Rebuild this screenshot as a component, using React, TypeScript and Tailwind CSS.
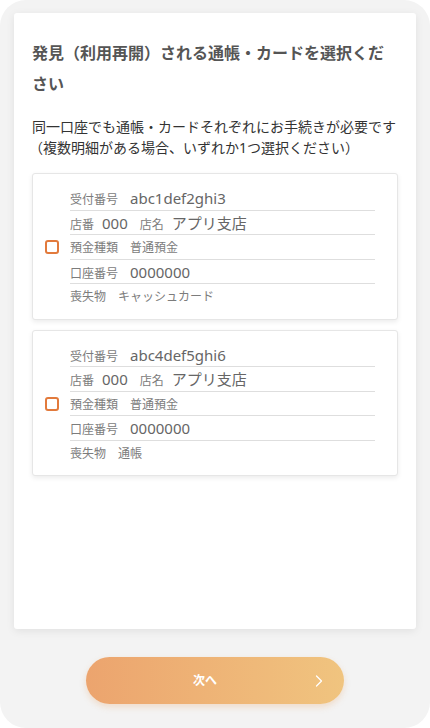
import { ChevronRight } from "lucide-react";

const font = { fontFamily: '"Noto Sans", "Noto Sans CJK JP", sans-serif' };

type Item = {
  receipt: string;
  lost: string;
};

const items: Item[] = [
  { receipt: "abc1def2ghi3", lost: "キャッシュカード" },
  { receipt: "abc4def5ghi6", lost: "通帳" },
];

function Row({ children, last }: { children: React.ReactNode; last?: boolean }) {
  return (
    <div
      className={`flex items-baseline gap-2 h-[24.5px] pt-[1px] overflow-hidden ${
        last ? "" : "border-b border-[#dedede]"
      }`}
    >
      {children}
    </div>
  );
}

function AccountCard({ item }: { item: Item }) {
  return (
    <div className="flex items-center rounded-[3px] border border-[#e6e6e6] bg-white pl-[12px] pr-[22px] pt-[12px] pb-[10px] shadow-[0_2px_5px_rgba(0,0,0,0.08)]">
      <div className="w-[14px] h-[14px] rounded-[3px] border-2 border-[#e27a3c] shrink-0" />
      <div className="flex-1 ml-[11px] text-[#7c7c7c] [&>div>span]:leading-[23px]">
        <Row>
          <span className="text-[12px]">受付番号</span>
          <span className="text-[15px] text-[#666] ml-1">{item.receipt}</span>
        </Row>
        <Row>
          <span className="text-[12px]">店番</span>
          <span className="text-[15px] text-[#666]">000</span>
          <span className="text-[12px] ml-1">店名</span>
          <span className="text-[15px] text-[#666]">アプリ支店</span>
        </Row>
        <Row>
          <span className="text-[12px]">預金種類</span>
          <span className="text-[12px] ml-1">普通預金</span>
        </Row>
        <Row>
          <span className="text-[12px]">口座番号</span>
          <span className="text-[15px] text-[#666] ml-1">0000000</span>
        </Row>
        <Row last>
          <span className="text-[12px]">喪失物</span>
          <span className="text-[12px] ml-1">{item.lost}</span>
        </Row>
      </div>
    </div>
  );
}

export default function App() {
  return (
    <div className="bg-white w-[430px] h-[728px]" style={font}>
      <div className="flex flex-col h-full rounded-[26px] bg-[#f3f3f3] px-[14px] pt-[13px]">
        {/* Main card */}
        <div className="h-[616px] bg-white rounded-[3px] shadow-[0_2px_8px_rgba(0,0,0,0.08)] px-[18px] pt-[25px]">
          <h1 className="text-[16px] font-bold leading-[31px] text-[#555]">
            発見（利用再開）される通帳・カードを選択ください
          </h1>
          <p className="mt-[16px] text-[14px] leading-[21px] text-[#333]">
            <span className="block">同一口座でも通帳・カードそれぞれにお手続きが必要です</span>
            <span className="block -ml-[3px]">（複数明細がある場合、いずれか1つ選択ください）</span>
          </p>
          <div className="mt-[15px] flex flex-col gap-[10px]">
            {items.map((item) => (
              <AccountCard key={item.receipt} item={item} />
            ))}
          </div>
        </div>

        {/* Next button */}
        <div className="flex justify-center mt-[28px]">
          <button className="relative w-[258px] h-[47px] rounded-full bg-gradient-to-r from-[#eca46e] to-[#f0c47f] shadow-[0_3px_6px_rgba(230,150,80,0.25)] text-white text-[12px] font-bold">
            <span className="-ml-[20px]">次へ</span>
            <ChevronRight className="absolute right-[15px] top-1/2 -translate-y-1/2 w-5 h-5" strokeWidth={1.5} />
          </button>
        </div>
      </div>
    </div>
  );
}
